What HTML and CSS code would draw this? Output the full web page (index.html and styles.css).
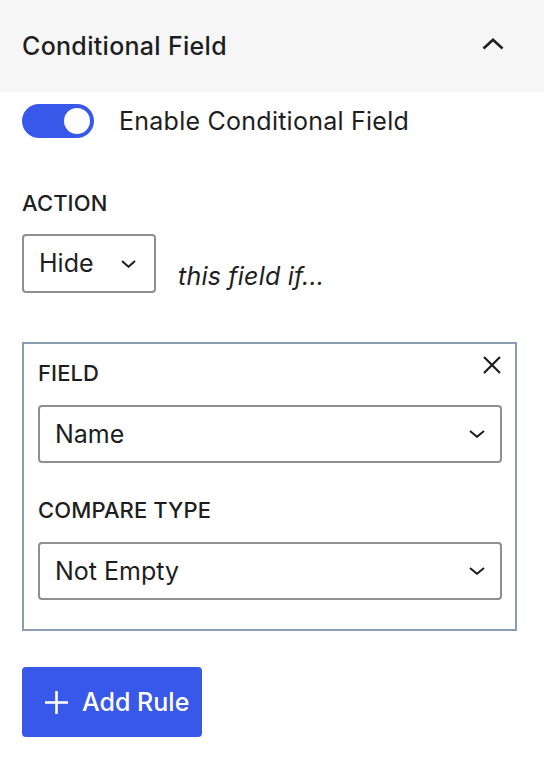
FILE: index.html
```html
<!DOCTYPE html>
<html lang="en">
<head>
<meta charset="utf-8">
<title>Conditional Field</title>
<link rel="stylesheet" href="styles.css">
</head>
<body>
<div class="panel">
  <div class="panel-header">
    <span class="panel-title">Conditional Field</span>
    <svg class="chev-up" width="22" height="12" viewBox="0 0 22 12"><path d="M1.5 10.5 L11 1.8 L20.5 10.5" fill="none" stroke="#1e1e1e" stroke-width="2.6"/></svg>
  </div>
  <div class="panel-body">
    <div class="toggle-row">
      <span class="toggle"><span class="knob"></span></span>
      <span class="toggle-label">Enable Conditional Field</span>
    </div>

    <div class="label action-label">ACTION</div>
    <div class="action-row">
      <div class="select select-small">
        <span>Hide</span>
        <svg width="15" height="8" viewBox="0 0 15 8"><path d="M1 1 L7.5 6.8 L14 1" fill="none" stroke="#1e1e1e" stroke-width="2"/></svg>
      </div>
      <span class="action-text">this field if...</span>
    </div>

    <div class="rule">
      <div class="rule-head">
        <div class="label">FIELD</div>
        <svg class="close" width="20" height="20" viewBox="0 0 20 20"><path d="M2 2 L18 18 M18 2 L2 18" fill="none" stroke="#1e1e1e" stroke-width="2.2"/></svg>
      </div>
      <div class="select select-wide">
        <span>Name</span>
        <svg width="16" height="8" viewBox="0 0 16 8"><path d="M1 1 L8 6.8 L15 1" fill="none" stroke="#1e1e1e" stroke-width="2"/></svg>
      </div>
      <div class="label compare-label">COMPARE TYPE</div>
      <div class="select select-wide">
        <span>Not Empty</span>
        <svg width="16" height="8" viewBox="0 0 16 8"><path d="M1 1 L8 6.8 L15 1" fill="none" stroke="#1e1e1e" stroke-width="2"/></svg>
      </div>
    </div>

    <button class="add-btn" type="button">
      <svg width="25" height="25" viewBox="0 0 25 25"><path d="M12.5 1 V24 M1 12.5 H24" fill="none" stroke="#ffffff" stroke-width="2.6"/></svg>
      <span>Add Rule</span>
    </button>
  </div>
</div>
</body>
</html>
```

FILE: styles.css
```css
* { box-sizing: border-box; }

body {
  margin: 0;
  background: #ffffff;
  font-family: Inter, "Noto Sans", "Liberation Sans", sans-serif;
  color: #1e1e1e;
}

.panel-header {
  height: 92px;
  background: #f6f6f6;
  display: flex;
  align-items: center;
  justify-content: space-between;
  padding: 0 40px 0 22px;
}

.panel-title {
  font-size: 25px;
  font-weight: 500;
  line-height: 25px;
  letter-spacing: 0.3px;
}

.chev-up { display: block; margin-top: -5px; }

.panel-body {
  padding: 12px 27px 30px 22px;
}

.toggle-row {
  display: flex;
  align-items: center;
  gap: 25px;
  height: 34px;
}

.toggle {
  width: 72px;
  height: 34px;
  border-radius: 17px;
  background: #3858e9;
  display: flex;
  align-items: center;
  justify-content: flex-end;
  padding-right: 4px;
}

.knob {
  width: 26px;
  height: 26px;
  border-radius: 50%;
  background: #ffffff;
}

.toggle-label {
  font-size: 25px;
  line-height: 25px;
  letter-spacing: 0.25px;
}

.label {
  font-size: 22px;
  line-height: 22px;
  font-weight: 500;
  letter-spacing: 0.1px;
}

.action-label { margin-top: 54px; }

.action-row {
  margin-top: 20px;
  display: flex;
  align-items: flex-end;
  gap: 22px;
}

.select {
  height: 59px;
  border: 2px solid #8f8f8f;
  border-radius: 4px;
  display: flex;
  align-items: center;
  justify-content: space-between;
  font-size: 25px;
  line-height: 25px;
  background: #fff;
}

.select-small {
  width: 134px;
  padding: 0 18px 0 15px;
}

.select-wide {
  height: 58px;
  padding: 0 15px 0 15px;
}

.action-text {
  font-style: italic;
  font-size: 25px;
  line-height: 24px;
  letter-spacing: 0.2px;
  margin-bottom: 5px;
}

.rule {
  margin-top: 49px;
  border: 2px solid #8b9db1;
  padding: 18px 13px 29px 14px;
}

.rule-head {
  display: flex;
  justify-content: space-between;
  align-items: flex-start;
  height: 22px;
}

.close { display: block; margin-top: -7px; }

.rule-head + .select { margin-top: 21px; }

.compare-label { margin-top: 36px; }

.compare-label + .select { margin-top: 21px; }

.add-btn {
  margin-top: 36px;
  width: 180px;
  height: 70px;
  border: 0;
  border-radius: 4px;
  background: #3858e9;
  color: #ffffff;
  font-family: inherit;
  font-size: 25px;
  font-weight: 500;
  display: flex;
  align-items: center;
  gap: 13px;
  padding: 0 12px 0 22px;
}

.add-btn svg { display: block; }
```
